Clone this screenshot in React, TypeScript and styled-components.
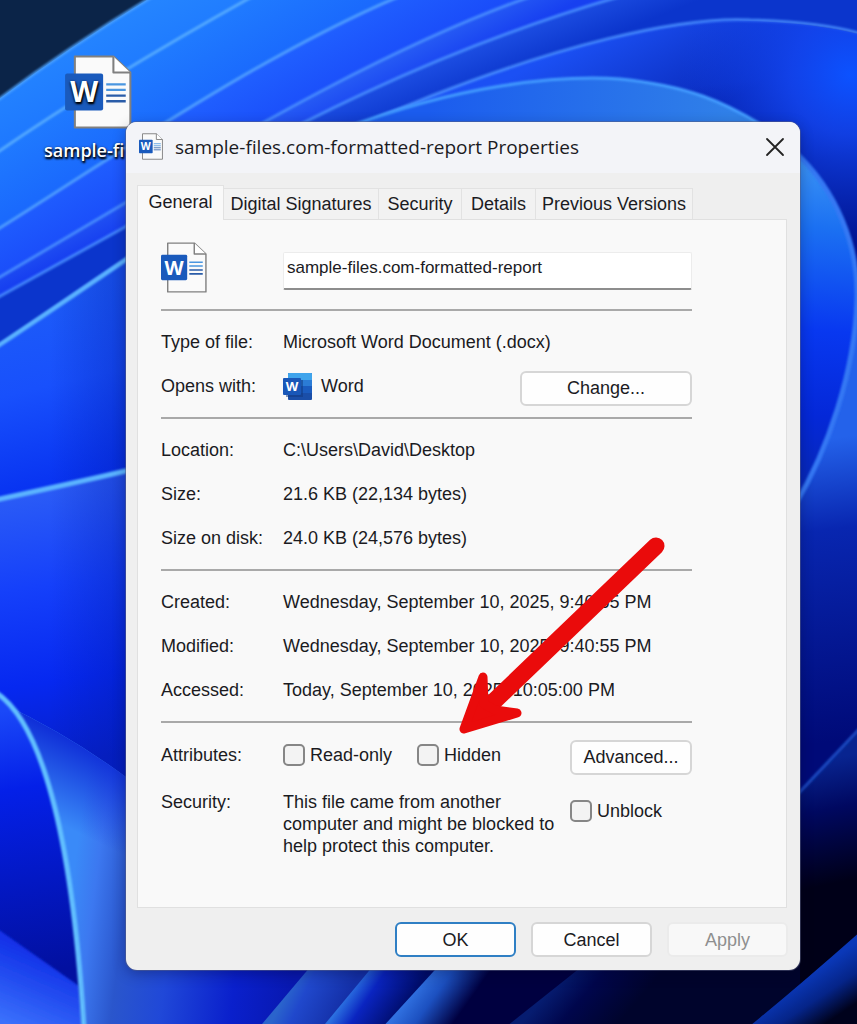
import React from "react";
import styled, { createGlobalStyle, css } from "styled-components";

const uiFont = `"Liberation Sans", Arial, sans-serif`;
const titleFont = `"Open Sans", "Segoe UI", sans-serif`;

const GlobalStyle = createGlobalStyle`
  *, *::before, *::after { box-sizing: border-box; }
  body { margin: 0; background: #00021c; font-family: ${uiFont}; color: #1b1b1f; }
  button, input { font: inherit; color: inherit; }
`;

const Desktop = styled.main`
  position: relative;
  min-height: 100vh;
  padding: 122px 57px 54px 126px;
  overflow: hidden;
`;

const WallpaperSvg = styled.svg`
  position: absolute;
  inset: 0;
  width: 100%;
  height: 100%;
`;

const Shortcut = styled.a`
  position: absolute;
  left: 44px;
  top: 55px;
  display: flex;
  flex-direction: column;
  gap: 7px;
  color: #fff;
  text-decoration: none;
  white-space: nowrap;
  font: 600 18px/28px ${titleFont};
  text-shadow: 1px 2px 2px #000, 0 1px 3px #000;

  svg { margin-left: 21px; }
`;

const Dialog = styled.section`
  position: relative;
  display: flex;
  flex-direction: column;
  width: 100%;
  max-width: 674px;
  border-radius: 11px;
  background: #efefef;
  box-shadow: 0 0 0 1px rgba(90, 95, 130, 0.5), 0 4px 14px rgba(0, 0, 30, 0.3);
`;

const TitleBar = styled.header`
  display: flex;
  align-items: center;
  gap: 12px;
  height: 51px;
  padding: 0 15px 2px 13px;
  border-radius: 11px 11px 0 0;
  background: #f3f4f8;
`;

const Title = styled.h1`
  flex: 1;
  margin: 0;
  font: 400 19px/28px ${titleFont};
  white-space: nowrap;
`;

const CloseButton = styled.button`
  display: flex;
  padding: 0;
  border: 0;
  background: none;
`;

const TabList = styled.div`
  display: flex;
  align-items: flex-end;
  height: 46px;
  padding: 0 11px;
`;

const Tab = styled.button<{ $active?: boolean; $width: number }>`
  flex: 0 1 ${(p) => p.$width}px;
  height: 31px;
  padding: 0;
  border: 1px solid #e2e2e2;
  border-left-width: 0;
  border-bottom-width: 0;
  background: #f2f2f2;
  font-size: 18px;
  line-height: 28px;
  white-space: nowrap;

  ${(p) =>
    p.$active &&
    css`
      position: relative;
      z-index: 1;
      height: 35px;
      margin-bottom: -1px;
      padding-bottom: 3px;
      border-left-width: 1px;
      background: #f9f9f9;
    `}
`;

const Panel = styled.form`
  margin: 0 13px 0 11px;
  padding: 22px 94px 41px 23px;
  border: 1px solid #e0e0e0;
  background: #f9f9f9;
`;

const Group = styled.div`
  padding: 9px 0;
  border-top: 2px solid #a9a9a9;

  &:last-child { padding-top: 10px; }
`;

const Row = styled.div`
  display: grid;
  grid-template-columns: 122px 1fr;
  align-items: center;
  min-height: 44px;
  font-size: 18px;
  line-height: 22px;
`;

const HeadRow = styled(Row)`
  min-height: 51px;
  margin-bottom: 16px;
`;

const SecurityRow = styled(Row)`
  align-items: start;
  padding-top: 14px;
`;

const Value = styled.div<{ $top?: boolean }>`
  display: flex;
  align-items: ${(p) => (p.$top ? "flex-start" : "center")};
  white-space: nowrap;
`;

const AppName = styled.span`
  flex: 1;
  padding-left: 9px;
`;

const Notice = styled.p`
  width: 287px;
  margin: 0;
  white-space: normal;
`;

const NameInput = styled.input`
  width: 100%;
  height: 38px;
  margin-top: 6px;
  padding: 0 3px 4px;
  border: 1px solid #ececec;
  border-bottom: 2px solid #8d8d8d;
  border-radius: 2px;
  background: #fff;
  font-size: 17px;
`;

const Check = styled.label<{ $width?: number }>`
  display: flex;
  align-items: center;
  gap: 5px;
  ${(p) => p.$width && `width: ${p.$width}px;`}

  input {
    appearance: none;
    width: 22px;
    height: 22px;
    margin: 0;
    border: 2px solid #868686;
    border-radius: 5px;
    background: #f3f3f3;
  }
`;

const UnblockCheck = styled(Check)`
  margin-top: 9px;
`;

const Button = styled.button<{ $width: number; $primary?: boolean }>`
  width: ${(p) => p.$width}px;
  height: 35px;
  padding: 0;
  border: ${(p) => (p.$primary ? "2px solid #2f7fc4" : "2px solid #d6d6d6")};
  border-radius: 6px;
  background: #fefefe;
  font-size: 18px;
  line-height: 22px;

  &:disabled {
    border-color: #ebebeb;
    background: #f8f8f8;
    color: #8f8f8f;
  }
`;

const RowButton = styled(Button)`
  margin: 4px 0 0 auto;
`;

const Footer = styled.footer`
  display: flex;
  justify-content: flex-end;
  gap: 15px;
  padding: 14px 12px 13px;
`;

const ArrowSvg = styled.svg`
  position: absolute;
  left: 329px;
  top: 410px;
  pointer-events: none;
`;

type Band = {
  curve: string;
  area: string;
  from: string;
  to: string;
  vector: [number, number, number, number];
  edge: string;
};

/* Wallpaper ribbons, painted back to front; each fill starts at its lit edge. */
const bands: Band[] = [
  { curve: "M-5 102Q70 46 155 -5", area: "H870V1030H-5Z", from: "#2484ff", to: "#1466ff", vector: [40, 60, 110, 200], edge: "#4fa4ff" },
  { curve: "M-5 154C70 102 160 48 255 -5", area: "H870V1030H-5Z", from: "#207cff", to: "#1458fb", vector: [100, 80, 170, 200], edge: "#5cb0ff" },
  { curve: "M-5 231C100 166 250 60 400 -4", area: "H870V1030H-5Z", from: "#2060ff", to: "#1640f6", vector: [180, 110, 230, 200], edge: "#55a5ff" },
  { curve: "M-5 280L125 203C250 128 400 42 535 -5", area: "H870V1030H-5Z", from: "#2b64f6", to: "#1740f0", vector: [300, 90, 320, 130], edge: "#4c93ff" },
  { curve: "M-5 299L125 227C270 130 450 45 625 -5", area: "H870V1030H-5Z", from: "#2256ea", to: "#0b35cc", vector: [430, 50, 450, 100], edge: "#4a90ff" },
  { curve: "M-5 348C35 322 85 286 125 260C260 150 600 12 750 20Q820 22 862 34", area: "V1030H-5Z", from: "#1b50f4", to: "#0828b8", vector: [560, 50, 620, 160], edge: "#4a90ff" },
];

const arch = "M340 130C460 84 560 75 620 79C690 86 725 103 760 124";
const discEdge = "M795 152C836 190 859 245 857 300C855 370 828 450 795 505";

function Wallpaper() {
  return (
    <WallpaperSvg viewBox="0 0 857 1024" preserveAspectRatio="xMidYMid slice" aria-hidden="true">
      <defs>
        {bands.map((b, i) => (
          <linearGradient key={i} id={`band${i}`} gradientUnits="userSpaceOnUse" x1={b.vector[0]} y1={b.vector[1]} x2={b.vector[2]} y2={b.vector[3]}>
            <stop offset="0" stopColor={b.from} />
            <stop offset="1" stopColor={b.to} />
          </linearGradient>
        ))}
        <linearGradient id="arch" gradientUnits="userSpaceOnUse" x1="430" y1="100" x2="730" y2="130">
          <stop offset="0" stopColor="#1b5cee" />
          <stop offset="1" stopColor="#3080e8" />
        </linearGradient>
        <linearGradient id="rightUpper" gradientUnits="userSpaceOnUse" x1="790" y1="75" x2="800" y2="160">
          <stop offset="0" stopColor="#001490" stopOpacity="0" />
          <stop offset="1" stopColor="#001490" />
        </linearGradient>
        <radialGradient id="topRight" gradientUnits="userSpaceOnUse" cx="850" cy="75" r="170">
          <stop offset="0" stopColor="#0c52ff" />
          <stop offset="0.35" stopColor="#1448f4" stopOpacity="0.8" />
          <stop offset="1" stopColor="#1040e8" stopOpacity="0" />
        </radialGradient>
        <linearGradient id="disc" gradientUnits="userSpaceOnUse" x1="825" y1="160" x2="800" y2="500">
          <stop offset="0" stopColor="#3b93f4" />
          <stop offset="0.2" stopColor="#1b70f2" />
          <stop offset="0.5" stopColor="#0838f0" />
          <stop offset="0.75" stopColor="#0428d8" />
          <stop offset="1" stopColor="#0828b0" />
        </linearGradient>
        <linearGradient id="rightMid" gradientUnits="userSpaceOnUse" x1="815" y1="440" x2="850" y2="740">
          <stop offset="0" stopColor="#2462ea" />
          <stop offset="0.3" stopColor="#0826b0" />
          <stop offset="1" stopColor="#000a78" />
        </linearGradient>
        <linearGradient id="rightLow" gradientUnits="userSpaceOnUse" x1="825" y1="760" x2="850" y2="880">
          <stop offset="0" stopColor="#082490" />
          <stop offset="0.4" stopColor="#000860" />
          <stop offset="1" stopColor="#000018" />
        </linearGradient>
        <linearGradient id="corner" gradientUnits="userSpaceOnUse" x1="800" y1="980" x2="828" y2="1022">
          <stop offset="0" stopColor="#0a38b8" />
          <stop offset="0.5" stopColor="#052488" />
          <stop offset="1" stopColor="#00021c" />
        </linearGradient>
        <linearGradient id="leftTop" gradientUnits="userSpaceOnUse" x1="30" y1="300" x2="75" y2="490">
          <stop offset="0" stopColor="#1d5cf8" />
          <stop offset="0.45" stopColor="#1850fc" />
          <stop offset="1" stopColor="#0630f0" />
        </linearGradient>
        <linearGradient id="leftMid" gradientUnits="userSpaceOnUse" x1="40" y1="490" x2="80" y2="760">
          <stop offset="0" stopColor="#2b5cf6" />
          <stop offset="0.35" stopColor="#1540fa" />
          <stop offset="0.7" stopColor="#0628f0" />
          <stop offset="1" stopColor="#0620c8" />
        </linearGradient>
        <linearGradient id="edgeShade" x1="0" y1="0" x2="1" y2="0">
          <stop offset="0" stopColor="#0018a0" stopOpacity="0" />
          <stop offset="1" stopColor="#0018a0" stopOpacity="0.35" />
        </linearGradient>
        <linearGradient id="petal" gradientUnits="userSpaceOnUse" x1="70" y1="900" x2="300" y2="930">
          <stop offset="0" stopColor="#3a8af8" />
          <stop offset="0.1" stopColor="#3c78f0" />
          <stop offset="0.24" stopColor="#2a56cc" />
          <stop offset="0.45" stopColor="#2048d8" />
          <stop offset="0.75" stopColor="#0a20cc" />
          <stop offset="1" stopColor="#0818b0" />
        </linearGradient>
        <linearGradient id="petalTop" gradientUnits="userSpaceOnUse" x1="88" y1="748" x2="52" y2="820">
          <stop offset="0" stopColor="#1030d8" />
          <stop offset="1" stopColor="#1030d8" stopOpacity="0" />
        </linearGradient>
        <linearGradient id="inner" gradientUnits="userSpaceOnUse" x1="10" y1="710" x2="50" y2="970">
          <stop offset="0" stopColor="#1a48f8" />
          <stop offset="0.3" stopColor="#0420e8" />
          <stop offset="1" stopColor="#0210a0" />
        </linearGradient>
        <linearGradient id="innerLow" gradientUnits="userSpaceOnUse" x1="40" y1="955" x2="10" y2="1024">
          <stop offset="0" stopColor="#1232e8" />
          <stop offset="1" stopColor="#3a70fc" />
        </linearGradient>
        <linearGradient id="fold1" gradientUnits="userSpaceOnUse" x1="285" y1="995" x2="335" y2="1020">
          <stop offset="0" stopColor="#2a64cc" />
          <stop offset="0.3" stopColor="#2048cc" />
          <stop offset="1" stopColor="#1430a8" />
        </linearGradient>
        <linearGradient id="fold2" gradientUnits="userSpaceOnUse" x1="347" y1="995" x2="392" y2="1025">
          <stop offset="0" stopColor="#2b70e0" />
          <stop offset="0.35" stopColor="#0a24c0" />
          <stop offset="1" stopColor="#000d6c" />
        </linearGradient>
        <linearGradient id="fold3" gradientUnits="userSpaceOnUse" x1="410" y1="995" x2="452" y2="1025">
          <stop offset="0" stopColor="#3070e0" />
          <stop offset="0.4" stopColor="#1c50c0" />
          <stop offset="1" stopColor="#000040" />
        </linearGradient>
        <linearGradient id="fold4" gradientUnits="userSpaceOnUse" x1="544" y1="997" x2="600" y2="1045">
          <stop offset="0" stopColor="#061c70" />
          <stop offset="0.4" stopColor="#00064c" />
          <stop offset="1" stopColor="#00042c" />
        </linearGradient>
        <filter id="soft" x="-10%" y="-10%" width="120%" height="120%">
          <feGaussianBlur stdDeviation="1" />
        </filter>
      </defs>
      <rect width="857" height="1024" fill="#0b2448" />
      {bands.map((b, i) => (
        <g key={i}>
          <path d={b.curve + b.area} fill={`url(#band${i})`} />
          <path d={b.curve} fill="none" stroke={b.edge} strokeWidth="3" strokeOpacity="0.85" filter="url(#soft)" />
        </g>
      ))}

      <path d="M640 60H870V1030H640Z" fill="url(#rightUpper)" />
      <path d="M660 26Q710 19 750 21Q820 23 870 37V260H660Z" fill="url(#topRight)" />
      <path d={arch + "V140H340Z"} fill="url(#arch)" />
      <path d={arch} fill="none" stroke="#439bff" strokeWidth="3" filter="url(#soft)" />

      <path d="M857 300V1030H795V505C828 450 855 370 857 300Z" fill="url(#rightMid)" />
      <path d={discEdge + "Z"} fill="url(#disc)" />
      <path d={discEdge} fill="none" stroke="#3478f4" strokeWidth="5" filter="url(#soft)" />
      <path d="M795 797L862 726V1030H795Z" fill="url(#rightLow)" />
      <path d="M795 797L862 726" stroke="#1a48c0" strokeWidth="3" filter="url(#soft)" />

      <path d="M-5 348Q70 298 130 257V480L-5 505Z" fill="url(#leftTop)" />
      <path d="M-5 500Q70 484 130 470V1030H-5Z" fill="url(#leftMid)" />
      <path d="M50 312L130 257V784H50Z" fill="url(#edgeShade)" />
      <path d="M-5 348Q70 298 130 257" fill="none" stroke="#5cb4ff" strokeWidth="4" filter="url(#soft)" />
      <path d="M-5 500Q70 484 130 470" fill="none" stroke="#5cb4ff" strokeWidth="5" filter="url(#soft)" />

      <path d="M-5 700Q70 735 130 780V960H330V1030H-5Z" fill="url(#petal)" />
      <path d="M-5 700Q70 735 130 780V860H-5Z" fill="url(#petalTop)" />
      <path d="M-5 692C40 720 72 830 85 1030H-5Z" fill="url(#inner)" />
      <path d="M-5 927L79 986L83 1030H-5Z" fill="url(#innerLow)" filter="url(#soft)" />
      <path d="M-5 692C40 720 72 830 84 1030" fill="none" stroke="#62c0ff" strokeWidth="5" filter="url(#soft)" />

      <path d="M257 1030L316 960H800V1030Z" fill="url(#fold1)" />
      <path d="M320 1030L378 960H800V1030Z" fill="url(#fold2)" />
      <path d="M380 1030L444 960H800V1030Z" fill="url(#fold3)" />
      <path d="M502 1030L590 960H800V1030Z" fill="url(#fold4)" />
      <path d="M745 1030Q800 985 862 930V1030Z" fill="url(#corner)" />
    </WallpaperSvg>
  );
}

function DocumentIcon({ size, fineLines = true }: { size: number; fineLines?: boolean }) {
  const outline = fineLines ? 2 : 2.5;
  return (
    <svg width={Math.round(size * 0.9)} height={size} viewBox="0 0 65 72" aria-hidden="true">
      <path d="M9.500 1.500H47L63.500 17V70.500H9.500Z" fill="#fafafa" stroke="#808080" strokeWidth={outline} strokeLinejoin="round" />
      <path d="M47 1.500V17H63.500" fill="#fff" stroke="#808080" strokeWidth={outline} strokeLinejoin="round" />
      <rect x="0" y="18" width="37" height="36" rx="2" fill="#1a5abc" />
      <path d="M40 28.500H59M40 34H59" stroke="#4a96e0" strokeWidth="2.200" />
      <path d="M40 39.500H59M40 45H59" stroke="#2a5ca8" strokeWidth="2.200" />
      <text x="18.500" y="46" textAnchor="middle" fontFamily="Open Sans, sans-serif" fontWeight="700" fontSize="28" fill="#fff">W</text>
    </svg>
  );
}

function WordIcon() {
  return (
    <svg width="29" height="27" viewBox="0 0 29 27" aria-hidden="true">
      <rect x="5" width="24" height="27" rx="1" fill="#1a4ea8" />
      <path d="M6 0H28Q29 0 29 1V7H5V1Q5 0 6 0Z" fill="#3fa4ec" />
      <rect x="5" y="7" width="24" height="6" fill="#2b7cd6" />
      <rect x="5" y="13" width="24" height="7" fill="#1b5cbf" />
      <rect x="3" y="7" width="17" height="17" fill="#10357c" opacity="0.5" />
      <rect y="5" width="18" height="17" rx="1" fill="#1957b8" />
      <text x="9" y="18" textAnchor="middle" fontFamily="Open Sans, sans-serif" fontWeight="700" fontSize="13" fill="#fff">W</text>
    </svg>
  );
}

const tabs = [
  { label: "General", width: 87 },
  { label: "Digital Signatures", width: 155 },
  { label: "Security", width: 83 },
  { label: "Details", width: 74 },
  { label: "Previous Versions", width: 157 },
];

const details = [
  [
    ["Location:", "C:\\Users\\David\\Desktop"],
    ["Size:", "21.6 KB (22,134 bytes)"],
    ["Size on disk:", "24.0 KB (24,576 bytes)"],
  ],
  [
    ["Created:", "Wednesday, September 10, 2025, 9:40:55 PM"],
    ["Modified:", "Wednesday, September 10, 2025, 9:40:55 PM"],
    ["Accessed:", "Today, September 10, 2025, 10:05:00 PM"],
  ],
];

export default function App() {
  return (
    <>
      <GlobalStyle />
      <Desktop>
        <Wallpaper />
        <Shortcut href="#document">
          <DocumentIcon size={74} />
          sample-fi
        </Shortcut>

        <Dialog role="dialog" aria-labelledby="dialog-title">
          <TitleBar>
            <DocumentIcon size={27} fineLines={false} />
            <Title id="dialog-title">sample-files.com-formatted-report Properties</Title>
            <CloseButton type="button" aria-label="Close">
              <svg width="20" height="20" viewBox="0 0 20 20" aria-hidden="true">
                <path d="M2 2L18 18M18 2L2 18" stroke="#222" strokeWidth="1.800" strokeLinecap="round" />
              </svg>
            </CloseButton>
          </TitleBar>

          <TabList role="tablist">
            {tabs.map((tab, i) => (
              <Tab key={tab.label} type="button" role="tab" aria-selected={i === 0} $active={i === 0} $width={tab.width}>
                {tab.label}
              </Tab>
            ))}
          </TabList>

          <Panel id="properties" onSubmit={(e) => e.preventDefault()}>
            <HeadRow>
              <DocumentIcon size={51} />
              <NameInput aria-label="File name" defaultValue="sample-files.com-formatted-report" />
            </HeadRow>

            <Group>
              <Row>
                <span>Type of file:</span>
                <Value>Microsoft Word Document (.docx)</Value>
              </Row>
              <Row>
                <span>Opens with:</span>
                <Value>
                  <WordIcon />
                  <AppName>Word</AppName>
                  <RowButton type="button" $width={172}>Change...</RowButton>
                </Value>
              </Row>
            </Group>

            {details.map((group, i) => (
              <Group key={i}>
                {group.map(([label, value]) => (
                  <Row key={label}>
                    <span>{label}</span>
                    <Value>{value}</Value>
                  </Row>
                ))}
              </Group>
            ))}

            <Group>
              <Row>
                <span>Attributes:</span>
                <Value>
                  <Check $width={134}>
                    <input type="checkbox" />
                    Read-only
                  </Check>
                  <Check>
                    <input type="checkbox" />
                    Hidden
                  </Check>
                  <RowButton type="button" $width={122}>Advanced...</RowButton>
                </Value>
              </Row>
              <SecurityRow>
                <span>Security:</span>
                <Value $top>
                  <Notice>This file came from another computer and might be blocked to help protect this computer.</Notice>
                  <UnblockCheck>
                    <input type="checkbox" />
                    Unblock
                  </UnblockCheck>
                </Value>
              </SecurityRow>
            </Group>
          </Panel>

          <Footer>
            <Button type="submit" form="properties" $width={121} $primary>OK</Button>
            <Button type="button" $width={121}>Cancel</Button>
            <Button type="button" $width={121} disabled>Apply</Button>
          </Footer>

          <ArrowSvg width="218" height="210" viewBox="0 0 218 210" aria-hidden="true">
            <path d="M201 14L32 176" stroke="#ea0b0b" strokeWidth="17" strokeLinecap="round" />
            <path d="M28 145L9 197L62 181L40 178L29 172Z" fill="#ea0b0b" stroke="#ea0b0b" strokeWidth="9" strokeLinejoin="round" />
          </ArrowSvg>
        </Dialog>
      </Desktop>
    </>
  );
}
